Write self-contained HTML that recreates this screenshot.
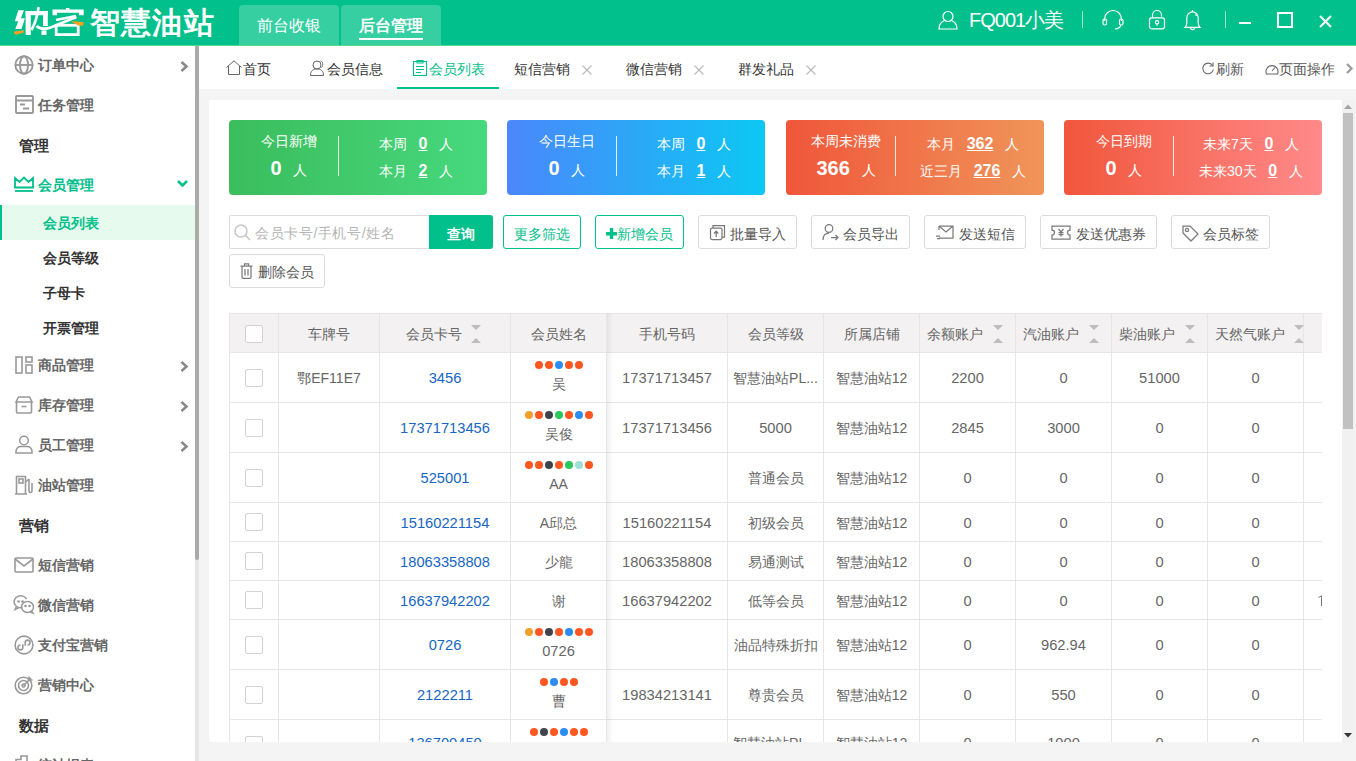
<!DOCTYPE html><html><head><meta charset="utf-8"><style>
*{margin:0;padding:0;box-sizing:border-box}
html,body{width:1356px;height:761px;overflow:hidden;background:#fff;font-family:"Liberation Sans",sans-serif;}
.p{position:absolute;white-space:nowrap}
.c{position:absolute;white-space:nowrap;text-align:center}
svg{position:absolute;overflow:visible}
</style></head><body>
<div class="p" style="left:0;top:0;width:1356px;height:45px;background:#02c08b"></div>
<div class="p" style="left:0;top:45px;width:1356px;height:1px;background:#5ad88c"></div>
<svg style="left:0;top:0" width="90" height="40" viewBox="0 0 90 40"><g fill="#fff"><polygon points="18.3,10.2 23.9,10.2 20.9,18.2 24.9,18.2 21.5,29 15.3,29 18.3,21.2 14.8,21.2"/><rect x="25.6" y="11" width="5.2" height="24"/><rect x="25.6" y="11" width="22.2" height="4.2"/><rect x="43" y="11" width="4.8" height="15"/><rect x="41.5" y="30.5" width="5" height="4.5"/><polygon points="52.5,9.6 83.7,9.6 83.7,15.2 79,15.2 79,12.8 57,12.8 57,15.2 52.5,15.2"/><rect x="66" y="8" width="3.5" height="3"/></g><g fill="none" stroke="#fff"><path d="M38.6 7 Q37 20 31.5 30" stroke-width="2.6"/><path d="M36.5 26 Q42 31 52 27 Q64 22 76.5 17" stroke-width="2.8"/><path d="M56 20 L76 16" stroke-width="2.4"/><rect x="56.2" y="25.3" width="22" height="9.3" stroke-width="2.8"/></g><g fill="#f4a020"><polygon points="14,31.5 24,30.3 23.5,32.8 17,34.6 14.2,34"/><polygon points="72,21 83.7,22.2 83.2,25.8 78.5,25.6 72.5,22.6"/></g></svg>
<div class="p" style="left:90px;top:4px;font-size:30px;letter-spacing:1.2px;line-height:38px;font-weight:bold;color:#fff">智慧油站</div>
<div class="p" style="left:239px;top:5px;width:100px;height:40px;background:#35cfa2;border-radius:4px 4px 0 0"></div>
<div class="p" style="left:341px;top:5px;width:100px;height:40px;background:#35cfa2;border-radius:4px 4px 0 0"></div>
<div class="c" style="left:239px;top:15px;width:100px;font-size:16px;line-height:22px;color:#fff">前台收银</div>
<div class="c" style="left:341px;top:15px;width:100px;font-size:16px;line-height:22px;color:#fff;font-weight:bold">后台管理</div>
<div class="p" style="left:359px;top:38px;width:64px;height:2px;background:#fff"></div>
<svg style="left:938px;top:10px" width="20" height="20" viewBox="0 0 20 20" fill="none" stroke="#fff" stroke-width="1.2"><circle cx="10" cy="6.5" r="5"/><path d="M6.5 10.5 C3 12 1 15 1 19 H19 C19 15 17 12 13.5 10.5"/></svg>
<div class="p" style="left:969px;top:8px;font-size:20px;letter-spacing:-1px;line-height:24px;color:#fff">FQ001小美</div>
<div class="p" style="left:1082px;top:11px;width:1px;height:17px;background:#9fe6cc"></div>
<svg style="left:1102px;top:10px" width="22" height="20" viewBox="0 0 22 20" fill="none" stroke="#fff" stroke-width="1.2"><path d="M2.5 11 V9 A8.5 8.5 0 0 1 19.5 9 V11"/><rect x="1" y="9" width="3.5" height="6" rx="1.5"/><rect x="17.5" y="9" width="3.5" height="6" rx="1.5"/><path d="M19 15 Q18 18.5 13 19"/></svg>
<svg style="left:1148px;top:9px" width="18" height="21" viewBox="0 0 18 21" fill="none" stroke="#fff" stroke-width="1.2"><path d="M4.5 9 V6 A4.5 4.5 0 0 1 13.5 6 V7.5"/><rect x="1.5" y="8.8" width="15" height="11" rx="2.2"/><circle cx="9" cy="13.3" r="1.7"/><path d="M9 15 V16.8"/></svg>
<svg style="left:1184px;top:9px" width="17" height="22" viewBox="0 0 17 22" fill="none" stroke="#fff" stroke-width="1.2"><path d="M8.5 1 V2.5 M1 18.3 Q2.8 16.5 2.8 14 V9 A5.7 6.2 0 0 1 14.2 9 V14 Q14.2 16.5 16 18.3 Z M6.5 18.8 A2 1.8 0 0 0 10.5 18.8 M11.5 5.5 L12.5 7"/></svg>
<div class="p" style="left:1225px;top:11px;width:1px;height:17px;background:#9fe6cc"></div>
<div class="p" style="left:1239px;top:22px;width:12px;height:2px;background:#fff"></div>
<div class="p" style="left:1277px;top:12px;width:16px;height:16px;border:2px solid #fff"></div>
<svg style="left:1319px;top:15px" width="13" height="13" viewBox="0 0 13 13" stroke="#fff" stroke-width="2"><path d="M1 1 L12 12 M12 1 L1 12"/></svg>
<div class="p" style="left:0;top:46px;width:199px;height:715px;background:#fff"></div>
<div class="p" style="left:195px;top:46px;width:4px;height:715px;background:#e6e6e6"></div>
<div class="p" style="left:195px;top:46px;width:4px;height:514px;background:#aaaaaa;border-radius:0 0 2px 2px"></div>
<div class="p" style="left:38px;top:55px;font-size:14px;line-height:20px;font-weight:bold;color:#666">订单中心</div>
<svg style="left:14px;top:55px" width="20" height="20" viewBox="0 0 20 20" fill="none" stroke="#999" stroke-width="1.9"><circle cx="10" cy="10" r="8.7"/><ellipse cx="10" cy="10" rx="4" ry="8.7"/><path d="M1.5 10 H18.5"/></svg>
<svg style="left:180px;top:61px" width="8" height="11" viewBox="0 0 8 11" fill="none" stroke="#888" stroke-width="2.5"><path d="M1.5 1 L6.5 5.5 L1.5 10"/></svg>
<div class="p" style="left:38px;top:95px;font-size:14px;line-height:20px;font-weight:bold;color:#666">任务管理</div>
<svg style="left:15px;top:95px" width="19" height="19" viewBox="0 0 19 19" fill="none" stroke="#999" stroke-width="1.9"><rect x="1" y="1" width="17" height="17" rx="1"/><path d="M1 5.5 H18 M5 9.5 H10 M8 13.5 H14"/></svg>
<div class="p" style="left:19px;top:136px;font-size:15px;line-height:20px;font-weight:bold;color:#333">管理</div>
<div class="p" style="left:38px;top:175px;font-size:14px;line-height:20px;font-weight:bold;color:#02c08b">会员管理</div>
<svg style="left:14px;top:176px" width="20" height="16" viewBox="0 0 20 16" fill="none" stroke="#02c08b" stroke-width="1.8"><path d="M1 11.5 V2 L5.5 6 L10 1.5 L14.5 6 L19 2 V11.5 Z" stroke-linejoin="miter"/><path d="M1 15 H19"/></svg>
<svg style="left:177px;top:180px" width="11" height="7" viewBox="0 0 11 7" fill="none" stroke="#02c08b" stroke-width="2.5"><path d="M1 1 L5.5 5.5 L10 1"/></svg>
<div class="p" style="left:0;top:205px;width:195px;height:35px;background:#e6fbee"></div>
<div class="p" style="left:0;top:205px;width:2px;height:35px;background:#02c08b"></div>
<div class="p" style="left:43px;top:213px;font-size:14px;line-height:20px;font-weight:bold;color:#02c08b">会员列表</div>
<div class="p" style="left:43px;top:248px;font-size:14px;line-height:20px;font-weight:bold;color:#333">会员等级</div>
<div class="p" style="left:43px;top:283px;font-size:14px;line-height:20px;font-weight:bold;color:#333">子母卡</div>
<div class="p" style="left:43px;top:318px;font-size:14px;line-height:20px;font-weight:bold;color:#333">开票管理</div>
<div class="p" style="left:38px;top:355px;font-size:14px;line-height:20px;font-weight:bold;color:#666">商品管理</div>
<svg style="left:15px;top:356px" width="18" height="18" viewBox="0 0 18 18" fill="none" stroke="#999" stroke-width="1.6"><rect x="1" y="1" width="6" height="16"/><rect x="11" y="1" width="6" height="5"/><rect x="11" y="9" width="6" height="8"/></svg>
<svg style="left:180px;top:361px" width="8" height="11" viewBox="0 0 8 11" fill="none" stroke="#888" stroke-width="2.5"><path d="M1.5 1 L6.5 5.5 L1.5 10"/></svg>
<div class="p" style="left:38px;top:395px;font-size:14px;line-height:20px;font-weight:bold;color:#666">库存管理</div>
<svg style="left:15px;top:396px" width="18" height="18" viewBox="0 0 18 18" fill="none" stroke="#999" stroke-width="1.6"><path d="M1 6 L3.5 1 H14.5 L17 6 Z"/><path d="M1.5 6 V16 Q1.5 17 2.5 17 H15.5 Q16.5 17 16.5 16 V6"/><path d="M6.5 10.5 H11.5"/></svg>
<svg style="left:180px;top:401px" width="8" height="11" viewBox="0 0 8 11" fill="none" stroke="#888" stroke-width="2.5"><path d="M1.5 1 L6.5 5.5 L1.5 10"/></svg>
<div class="p" style="left:38px;top:435px;font-size:14px;line-height:20px;font-weight:bold;color:#666">员工管理</div>
<svg style="left:15px;top:435px" width="18" height="19" viewBox="0 0 18 19" fill="none" stroke="#999" stroke-width="1.6"><circle cx="9" cy="5.5" r="4.3"/><path d="M1 18 V16 A5 5 0 0 1 6 11.5 H12 A5 5 0 0 1 17 16 V18 Z"/></svg>
<svg style="left:180px;top:441px" width="8" height="11" viewBox="0 0 8 11" fill="none" stroke="#888" stroke-width="2.5"><path d="M1.5 1 L6.5 5.5 L1.5 10"/></svg>
<div class="p" style="left:38px;top:475px;font-size:14px;line-height:20px;font-weight:bold;color:#666">油站管理</div>
<svg style="left:14px;top:475px" width="20" height="20" viewBox="0 0 20 20" fill="none" stroke="#999" stroke-width="1.6"><path d="M1 19 H13 M2.5 19 V1.5 H11.5 V19"/><rect x="5" y="4" width="4" height="4"/><path d="M11.5 7 L15 4 M15 4 V16 A1.5 1.5 0 0 0 18 16 V8"/></svg>
<div class="p" style="left:19px;top:516px;font-size:15px;line-height:20px;font-weight:bold;color:#333">营销</div>
<div class="p" style="left:38px;top:555px;font-size:14px;line-height:20px;font-weight:bold;color:#666">短信营销</div>
<svg style="left:14px;top:557px" width="20" height="16" viewBox="0 0 20 16" fill="none" stroke="#999" stroke-width="1.6"><rect x="1" y="1" width="18" height="14" rx="1"/><path d="M1 2 L10 9 L19 2"/></svg>
<div class="p" style="left:38px;top:595px;font-size:14px;line-height:20px;font-weight:bold;color:#666">微信营销</div>
<svg style="left:13px;top:595px" width="22" height="20" viewBox="0 0 22 20" fill="none" stroke="#999" stroke-width="1.5"><path d="M9.5 12.5 A6.5 6 0 1 1 13.5 4.2"/><path d="M3.5 11.5 L2 14.5 L5.5 13"/><ellipse cx="14.5" cy="12" rx="6" ry="5.5"/><path d="M18.5 16 L20 18 L17 17"/><circle cx="5.5" cy="6.5" r="0.6" fill="#999"/><circle cx="9.5" cy="6.5" r="0.6" fill="#999"/><circle cx="12.5" cy="11" r="0.6" fill="#999"/><circle cx="16.5" cy="11" r="0.6" fill="#999"/></svg>
<div class="p" style="left:38px;top:635px;font-size:14px;line-height:20px;font-weight:bold;color:#666">支付宝营销</div>
<svg style="left:14px;top:635px" width="20" height="20" viewBox="0 0 20 20" fill="none" stroke="#999" stroke-width="1.6"><circle cx="10" cy="10" r="8.9"/><path d="M8.8 9.2 V12.5 A2.4 2.4 0 1 1 6.4 10.1 M11.2 10.8 V7.5 A2.4 2.4 0 1 1 13.6 9.9"/></svg>
<div class="p" style="left:38px;top:675px;font-size:14px;line-height:20px;font-weight:bold;color:#666">营销中心</div>
<svg style="left:14px;top:675px" width="20" height="20" viewBox="0 0 20 20" fill="none" stroke="#999" stroke-width="1.6"><circle cx="9.5" cy="10.5" r="8.3"/><circle cx="9.5" cy="10.5" r="5"/><circle cx="9.5" cy="10.5" r="1.5"/><path d="M9.5 10.5 L17 3 M15 1.5 V5 H18.5"/></svg>
<div class="p" style="left:19px;top:716px;font-size:15px;line-height:20px;font-weight:bold;color:#333">数据</div>
<div class="p" style="left:38px;top:755px;font-size:14px;line-height:20px;font-weight:bold;color:#666">统计报表</div>
<svg style="left:15px;top:755px" width="18" height="20" viewBox="0 0 18 20" fill="none" stroke="#999" stroke-width="1.6"><path d="M1 19 V4.5 H6 V1 H12 V19 Z"/></svg>
<div class="p" style="left:199px;top:46px;width:1157px;height:43px;background:#fff"></div>
<div class="p" style="left:199px;top:89px;width:1157px;height:672px;background:#f4f4f4"></div>
<svg style="left:226px;top:60px" width="16" height="15" viewBox="0 0 16 15" fill="none" stroke="#666" stroke-width="1"><path d="M0.5 7.5 L8 0.8 L15.5 7.5 M2.5 6 V14.5 H13.5 V6"/></svg>
<div class="p" style="left:243px;top:59px;font-size:14px;line-height:20px;color:#333">首页</div>
<svg style="left:310px;top:60px" width="16" height="16" viewBox="0 0 16 16" fill="none" stroke="#666" stroke-width="1"><circle cx="7" cy="5" r="4"/><path d="M0.5 15.5 C0.5 11 3 9 7 9 C11 9 13.5 11 13.5 15.5 Z M10.5 1 C13 1.5 13.5 5 11.5 7.5"/></svg>
<div class="p" style="left:327px;top:59px;font-size:14px;line-height:20px;color:#333">会员信息</div>
<svg style="left:413px;top:60px" width="14" height="16" viewBox="0 0 14 16" fill="none" stroke="#02c08b" stroke-width="1.1"><rect x="0.5" y="1.5" width="13" height="14"/><path d="M4 0.5 H10 V3 H4 Z M3 6.5 H11 M3 9.5 H11 M3 12.5 H8"/></svg>
<div class="p" style="left:429px;top:59px;font-size:14px;line-height:20px;color:#02c08b">会员列表</div>
<div class="p" style="left:397px;top:87px;width:102px;height:2px;background:#02c08b"></div>
<div class="p" style="left:514px;top:59px;font-size:14px;line-height:20px;color:#333">短信营销</div>
<svg style="left:582px;top:65px" width="10" height="10" viewBox="0 0 10 10" stroke="#bbb" stroke-width="1.1"><path d="M0.5 0.5 L9.5 9.5 M9.5 0.5 L0.5 9.5"/></svg>
<div class="p" style="left:626px;top:59px;font-size:14px;line-height:20px;color:#333">微信营销</div>
<svg style="left:694px;top:65px" width="10" height="10" viewBox="0 0 10 10" stroke="#bbb" stroke-width="1.1"><path d="M0.5 0.5 L9.5 9.5 M9.5 0.5 L0.5 9.5"/></svg>
<div class="p" style="left:738px;top:59px;font-size:14px;line-height:20px;color:#333">群发礼品</div>
<svg style="left:806px;top:65px" width="10" height="10" viewBox="0 0 10 10" stroke="#bbb" stroke-width="1.1"><path d="M0.5 0.5 L9.5 9.5 M9.5 0.5 L0.5 9.5"/></svg>
<svg style="left:1202px;top:62px" width="12" height="13" viewBox="0 0 12 13" fill="none" stroke="#666" stroke-width="1.1"><path d="M10.5 3.5 A5.3 5.3 0 1 0 11.3 7.5"/><path d="M11 0.5 V4 H7.5"/></svg>
<div class="p" style="left:1216px;top:59px;font-size:14px;line-height:20px;color:#555">刷新</div>
<svg style="left:1265px;top:63px" width="14" height="12" viewBox="0 0 14 12" fill="none" stroke="#666" stroke-width="1.1"><path d="M1.5 11 A6 6 0 1 1 12.5 11 Z M7 8 L10 4.5"/></svg>
<div class="p" style="left:1279px;top:59px;font-size:14px;line-height:20px;color:#555">页面操作</div>
<svg style="left:1346px;top:63px" width="7" height="11" viewBox="0 0 7 11" fill="none" stroke="#999" stroke-width="2.2"><path d="M1 1 L5.5 5.5 L1 10"/></svg>
<div class="p" style="left:209px;top:100px;width:1133px;height:642px;background:#fff;border-radius:2px 0 0 2px"></div>
<div class="p" style="left:1342px;top:100px;width:13px;height:642px;background:#f1f1f1"></div>
<div class="p" style="left:1343px;top:113px;width:10px;height:316px;background:#c1c1c1"></div>
<svg style="left:1344px;top:104px" width="8" height="5" viewBox="0 0 8 5"><path d="M0 5 L4 0.5 L8 5 Z" fill="#a3a3a3"/></svg>
<svg style="left:1344px;top:733px" width="8" height="5" viewBox="0 0 8 5"><path d="M0 0 L4 4.5 L8 0 Z" fill="#333"/></svg>
<div class="p" style="left:229px;top:120px;width:258px;height:75px;background:linear-gradient(90deg,#3bbd5c,#47d87e);border-radius:4px"></div>
<div class="c" style="left:229px;top:131px;width:120px;font-size:14px;line-height:20px;color:#fff">今日新增</div>
<div class="c" style="left:229px;top:156px;width:120px;font-size:14px;line-height:24px;color:#fff"><b style="font-size:20px">0</b>&nbsp;&nbsp;&nbsp;人</div>
<div class="p" style="left:338px;top:136px;width:1px;height:40px;background:rgba(255,255,255,0.85)"></div>
<div class="c" style="left:346px;top:134px;width:140px;font-size:14px;line-height:20px;color:#fff">本周&nbsp;&nbsp;&nbsp;<b style="font-size:16px;text-decoration:underline">0</b>&nbsp;&nbsp;&nbsp;人</div>
<div class="c" style="left:346px;top:161px;width:140px;font-size:14px;line-height:20px;color:#fff">本月&nbsp;&nbsp;&nbsp;<b style="font-size:16px;text-decoration:underline">2</b>&nbsp;&nbsp;&nbsp;人</div>
<div class="p" style="left:507px;top:120px;width:258px;height:75px;background:linear-gradient(90deg,#4b87fb,#0cc8f3);border-radius:4px"></div>
<div class="c" style="left:507px;top:131px;width:120px;font-size:14px;line-height:20px;color:#fff">今日生日</div>
<div class="c" style="left:507px;top:156px;width:120px;font-size:14px;line-height:24px;color:#fff"><b style="font-size:20px">0</b>&nbsp;&nbsp;&nbsp;人</div>
<div class="p" style="left:616px;top:136px;width:1px;height:40px;background:rgba(255,255,255,0.85)"></div>
<div class="c" style="left:624px;top:134px;width:140px;font-size:14px;line-height:20px;color:#fff">本周&nbsp;&nbsp;&nbsp;<b style="font-size:16px;text-decoration:underline">0</b>&nbsp;&nbsp;&nbsp;人</div>
<div class="c" style="left:624px;top:161px;width:140px;font-size:14px;line-height:20px;color:#fff">本月&nbsp;&nbsp;&nbsp;<b style="font-size:16px;text-decoration:underline">1</b>&nbsp;&nbsp;&nbsp;人</div>
<div class="p" style="left:786px;top:120px;width:258px;height:75px;background:linear-gradient(90deg,#f0563a,#f0955a);border-radius:4px"></div>
<div class="c" style="left:786px;top:131px;width:120px;font-size:14px;line-height:20px;color:#fff">本周未消费</div>
<div class="c" style="left:786px;top:156px;width:120px;font-size:14px;line-height:24px;color:#fff"><b style="font-size:20px">366</b>&nbsp;&nbsp;&nbsp;人</div>
<div class="p" style="left:895px;top:136px;width:1px;height:40px;background:rgba(255,255,255,0.85)"></div>
<div class="c" style="left:903px;top:134px;width:140px;font-size:14px;line-height:20px;color:#fff">本月&nbsp;&nbsp;&nbsp;<b style="font-size:16px;text-decoration:underline">362</b>&nbsp;&nbsp;&nbsp;人</div>
<div class="c" style="left:903px;top:161px;width:140px;font-size:14px;line-height:20px;color:#fff">近三月&nbsp;&nbsp;&nbsp;<b style="font-size:16px;text-decoration:underline">276</b>&nbsp;&nbsp;&nbsp;人</div>
<div class="p" style="left:1064px;top:120px;width:258px;height:75px;background:linear-gradient(90deg,#f1563b,#ff8a8a);border-radius:4px"></div>
<div class="c" style="left:1064px;top:131px;width:120px;font-size:14px;line-height:20px;color:#fff">今日到期</div>
<div class="c" style="left:1064px;top:156px;width:120px;font-size:14px;line-height:24px;color:#fff"><b style="font-size:20px">0</b>&nbsp;&nbsp;&nbsp;人</div>
<div class="p" style="left:1173px;top:136px;width:1px;height:40px;background:rgba(255,255,255,0.85)"></div>
<div class="c" style="left:1181px;top:134px;width:140px;font-size:14px;line-height:20px;color:#fff">未来7天&nbsp;&nbsp;&nbsp;<b style="font-size:16px;text-decoration:underline">0</b>&nbsp;&nbsp;&nbsp;人</div>
<div class="c" style="left:1181px;top:161px;width:140px;font-size:14px;line-height:20px;color:#fff">未来30天&nbsp;&nbsp;&nbsp;<b style="font-size:16px;text-decoration:underline">0</b>&nbsp;&nbsp;&nbsp;人</div>
<div class="p" style="left:229px;top:215px;width:201px;height:34px;border:1px solid #dcdcdc;border-right:none;border-radius:2px 0 0 2px"></div>
<svg style="left:234px;top:224px" width="17" height="17" viewBox="0 0 17 17" fill="none" stroke="#c8c8c8" stroke-width="1.6"><circle cx="7" cy="7" r="6"/><path d="M11.5 11.5 L16 16"/></svg>
<div class="p" style="left:255px;top:223px;font-size:14px;letter-spacing:0.6px;line-height:20px;color:#b5b5b5">会员卡号/手机号/姓名</div>
<div class="c" style="left:429px;top:215px;width:64px;height:34px;background:#02c08b;border-radius:0 3px 3px 0;color:#fff;font-size:14px;line-height:38px;font-weight:bold">查询</div>
<div class="p" style="left:503px;top:215px;width:78px;height:34px;border:1px solid #02c08b;border-radius:3px;background:#fff"></div>

<div class="c" style="left:503px;top:224px;width:78px;font-size:14px;line-height:20px;color:#02c08b">更多筛选</div>
<div class="p" style="left:595px;top:215px;width:89px;height:34px;border:1px solid #02c08b;border-radius:3px;background:#fff"></div>

<svg style="left:606px;top:228px" width="11" height="11" viewBox="0 0 11 11"><path d="M0 4 H11 V7.5 H0 Z M3.8 0 H7.3 V11 H3.8 Z" fill="#02c08b"/></svg>
<div class="p" style="left:617px;top:224px;font-size:14px;line-height:20px;color:#02c08b">新增会员</div>
<div class="p" style="left:698px;top:215px;width:99px;height:34px;border:1px solid #dcdcdc;border-radius:3px;background:#fff"></div>

<div class="p" style="left:730px;top:224px;font-size:14px;line-height:20px;color:#555">批量导入</div>
<div class="p" style="left:811px;top:215px;width:99px;height:34px;border:1px solid #dcdcdc;border-radius:3px;background:#fff"></div>

<div class="p" style="left:843px;top:224px;font-size:14px;line-height:20px;color:#555">会员导出</div>
<div class="p" style="left:924px;top:215px;width:102px;height:34px;border:1px solid #dcdcdc;border-radius:3px;background:#fff"></div>

<div class="p" style="left:959px;top:224px;font-size:14px;line-height:20px;color:#555">发送短信</div>
<div class="p" style="left:1040px;top:215px;width:117px;height:34px;border:1px solid #dcdcdc;border-radius:3px;background:#fff"></div>

<div class="p" style="left:1076px;top:224px;font-size:14px;line-height:20px;color:#555">发送优惠券</div>
<div class="p" style="left:1171px;top:215px;width:99px;height:34px;border:1px solid #dcdcdc;border-radius:3px;background:#fff"></div>

<div class="p" style="left:1203px;top:224px;font-size:14px;line-height:20px;color:#555">会员标签</div>
<svg style="left:709px;top:224px" width="17" height="17" viewBox="0 0 17 17" fill="none" stroke="#7a7a7a" stroke-width="1.25"><path d="M4 4 V1.5 H15.5 V13 H13"/><rect x="1.5" y="4" width="11.5" height="11.5" rx="1.5"/><path d="M7.2 13 V7.5 M5 9.5 L7.2 7.2 L9.4 9.5"/></svg>
<svg style="left:822px;top:224px" width="17" height="17" viewBox="0 0 17 17" fill="none" stroke="#7a7a7a" stroke-width="1.25"><circle cx="7" cy="4.5" r="3.8"/><path d="M1 16 C1 11 3.5 9 7 9 M9 13.5 H16 M13.5 11 L16 13.5 L13.5 16"/></svg>
<svg style="left:935px;top:225px" width="19" height="15" viewBox="0 0 19 15" fill="none" stroke="#7a7a7a" stroke-width="1.25"><path d="M4 1 H18 V13 H4 M4 1 V5 M4 1 L11 7 L18 1"/><path d="M1 11 H5 M2 13.5 H5"/></svg>
<svg style="left:1051px;top:225px" width="20" height="15" viewBox="0 0 20 15" fill="none" stroke="#7a7a7a" stroke-width="1.25"><path d="M1 1 H19 V5 A2.5 2.5 0 0 0 19 10 V14 H1 V10 A2.5 2.5 0 0 0 1 5 Z"/><path d="M7.5 4 L10 7 L12.5 4 M10 7 V11.5 M7.5 7.5 H12.5 M7.5 9.5 H12.5"/></svg>
<svg style="left:1182px;top:225px" width="17" height="17" viewBox="0 0 17 17" fill="none" stroke="#7a7a7a" stroke-width="1.25"><path d="M1 1 H8 L16 9 L9 16 L1 8 Z"/><circle cx="5" cy="5" r="1.6"/></svg>
<div class="p" style="left:229px;top:254px;width:96px;height:34px;border:1px solid #dcdcdc;border-radius:3px;background:#fff"></div>

<svg style="left:240px;top:263px" width="13" height="16" viewBox="0 0 13 16" fill="none" stroke="#7a7a7a" stroke-width="1.25"><path d="M0.5 3 H12.5 M4.5 3 V0.8 H8.5 V3 M2 3 V14 Q2 15.3 3.3 15.3 H9.7 Q11 15.3 11 14 V3 M5 6 V12.5 M8 6 V12.5"/></svg>
<div class="p" style="left:258px;top:262px;font-size:14px;line-height:20px;color:#555">删除会员</div>
<div class="p" style="left:229px;top:313px;width:1093px;height:429px;overflow:hidden">
<div class="p" style="left:0px;top:0px;width:1093px;height:40px;background:#f3f1f2"></div>
<div class="p" style="left:0px;top:0px;width:1093px;height:1px;background:#e6e6e6"></div>
<div class="p" style="left:0px;top:39px;width:1093px;height:1px;background:#e6e6e6"></div>
<div class="p" style="left:0px;top:89px;width:1093px;height:1px;background:#e6e6e6"></div>
<div class="p" style="left:0px;top:139px;width:1093px;height:1px;background:#e6e6e6"></div>
<div class="p" style="left:0px;top:189px;width:1093px;height:1px;background:#e6e6e6"></div>
<div class="p" style="left:0px;top:228px;width:1093px;height:1px;background:#e6e6e6"></div>
<div class="p" style="left:0px;top:267px;width:1093px;height:1px;background:#e6e6e6"></div>
<div class="p" style="left:0px;top:306px;width:1093px;height:1px;background:#e6e6e6"></div>
<div class="p" style="left:0px;top:356px;width:1093px;height:1px;background:#e6e6e6"></div>
<div class="p" style="left:0px;top:406px;width:1093px;height:1px;background:#e6e6e6"></div>
<div class="p" style="left:0px;top:0px;width:1px;height:429px;background:#e6e6e6"></div>
<div class="p" style="left:49px;top:0px;width:1px;height:429px;background:#e6e6e6"></div>
<div class="p" style="left:150px;top:0px;width:1px;height:429px;background:#e6e6e6"></div>
<div class="p" style="left:281px;top:0px;width:1px;height:429px;background:#e6e6e6"></div>
<div class="p" style="left:377px;top:0px;width:1px;height:429px;background:#e6e6e6"></div>
<div class="p" style="left:498px;top:0px;width:1px;height:429px;background:#e6e6e6"></div>
<div class="p" style="left:594px;top:0px;width:1px;height:429px;background:#e6e6e6"></div>
<div class="p" style="left:690px;top:0px;width:1px;height:429px;background:#e6e6e6"></div>
<div class="p" style="left:786px;top:0px;width:1px;height:429px;background:#e6e6e6"></div>
<div class="p" style="left:882px;top:0px;width:1px;height:429px;background:#e6e6e6"></div>
<div class="p" style="left:978px;top:0px;width:1px;height:429px;background:#e6e6e6"></div>
<div class="p" style="left:1074px;top:0px;width:1px;height:429px;background:#e6e6e6"></div>
<div class="p" style="left:378px;top:0;width:6px;height:429px;background:linear-gradient(90deg,rgba(0,0,0,0.06),rgba(0,0,0,0))"></div>
<div class="p" style="left:16px;top:12px;width:18px;height:18px;border:1px solid #d3d3d3;border-radius:2px;background:#fff"></div>
<div class="c" style="left:50px;top:11px;width:100px;font-size:14px;line-height:20px;color:#666">车牌号</div>
<div class="p" style="left:177px;top:11px;font-size:14px;line-height:20px;color:#666">会员卡号</div>
<svg style="left:242px;top:12px" width="10" height="18" viewBox="0 0 10 18"><path d="M0 0 H10 L5 5 Z M0 18 H10 L5 13 Z" fill="#bdbdbd"/></svg>
<div class="c" style="left:282px;top:11px;width:95px;font-size:14px;line-height:20px;color:#666">会员姓名</div>
<div class="c" style="left:378px;top:11px;width:120px;font-size:14px;line-height:20px;color:#666">手机号码</div>
<div class="c" style="left:499px;top:11px;width:95px;font-size:14px;line-height:20px;color:#666">会员等级</div>
<div class="c" style="left:595px;top:11px;width:95px;font-size:14px;line-height:20px;color:#666">所属店铺</div>
<div class="p" style="left:698px;top:11px;font-size:14px;line-height:20px;color:#666">余额账户</div>
<svg style="left:764px;top:12px" width="10" height="18" viewBox="0 0 10 18"><path d="M0 0 H10 L5 5 Z M0 18 H10 L5 13 Z" fill="#bdbdbd"/></svg>
<div class="p" style="left:794px;top:11px;font-size:14px;line-height:20px;color:#666">汽油账户</div>
<svg style="left:860px;top:12px" width="10" height="18" viewBox="0 0 10 18"><path d="M0 0 H10 L5 5 Z M0 18 H10 L5 13 Z" fill="#bdbdbd"/></svg>
<div class="p" style="left:890px;top:11px;font-size:14px;line-height:20px;color:#666">柴油账户</div>
<svg style="left:956px;top:12px" width="10" height="18" viewBox="0 0 10 18"><path d="M0 0 H10 L5 5 Z M0 18 H10 L5 13 Z" fill="#bdbdbd"/></svg>
<div class="p" style="left:986px;top:11px;font-size:14px;line-height:20px;color:#666">天然气账户</div>
<svg style="left:1065px;top:12px" width="10" height="18" viewBox="0 0 10 18"><path d="M0 0 H10 L5 5 Z M0 18 H10 L5 13 Z" fill="#bdbdbd"/></svg>
<div class="p" style="left:16px;top:56px;width:18px;height:18px;border:1px solid #d3d3d3;border-radius:2px;background:#fff"></div>
<div class="c" style="left:50px;top:55px;width:100px;font-size:14px;line-height:20px;color:#666">鄂EF11E7</div>
<div class="c" style="left:151px;top:55px;width:130px;font-size:14.7px;line-height:20px;color:#1766c4">3456</div>
<div class="p" style="left:306.0px;top:48px;width:48px;height:8px"><span style="position:absolute;left:0px;top:0;width:8px;height:8px;border-radius:50%;background:#ff5722"></span><span style="position:absolute;left:10px;top:0;width:8px;height:8px;border-radius:50%;background:#ff5722"></span><span style="position:absolute;left:20px;top:0;width:8px;height:8px;border-radius:50%;background:#2d8cf0"></span><span style="position:absolute;left:30px;top:0;width:8px;height:8px;border-radius:50%;background:#ff5722"></span><span style="position:absolute;left:40px;top:0;width:8px;height:8px;border-radius:50%;background:#ff5722"></span></div>
<div class="c" style="left:282px;top:61px;width:95px;font-size:14px;line-height:20px;color:#666">吴</div>
<div class="c" style="left:378px;top:55px;width:120px;font-size:14.7px;line-height:20px;color:#666">17371713457</div>
<div class="c" style="left:499px;top:55px;width:95px;font-size:14px;line-height:20px;color:#666">智慧油站PL...</div>
<div class="c" style="left:595px;top:55px;width:95px;font-size:14px;line-height:20px;color:#666">智慧油站12</div>
<div class="c" style="left:691px;top:55px;width:95px;font-size:14.7px;line-height:20px;color:#666">2200</div>
<div class="c" style="left:787px;top:55px;width:95px;font-size:14.7px;line-height:20px;color:#666">0</div>
<div class="c" style="left:883px;top:55px;width:95px;font-size:14.7px;line-height:20px;color:#666">51000</div>
<div class="c" style="left:979px;top:55px;width:95px;font-size:14.7px;line-height:20px;color:#666">0</div>
<div class="p" style="left:16px;top:106px;width:18px;height:18px;border:1px solid #d3d3d3;border-radius:2px;background:#fff"></div>
<div class="c" style="left:50px;top:105px;width:100px;font-size:14px;line-height:20px;color:#666"></div>
<div class="c" style="left:151px;top:105px;width:130px;font-size:14.7px;line-height:20px;color:#1766c4">17371713456</div>
<div class="p" style="left:296.0px;top:98px;width:68px;height:8px"><span style="position:absolute;left:0px;top:0;width:8px;height:8px;border-radius:50%;background:#f0a02c"></span><span style="position:absolute;left:10px;top:0;width:8px;height:8px;border-radius:50%;background:#ff5722"></span><span style="position:absolute;left:20px;top:0;width:8px;height:8px;border-radius:50%;background:#3f434a"></span><span style="position:absolute;left:30px;top:0;width:8px;height:8px;border-radius:50%;background:#2ac75a"></span><span style="position:absolute;left:40px;top:0;width:8px;height:8px;border-radius:50%;background:#ff5722"></span><span style="position:absolute;left:50px;top:0;width:8px;height:8px;border-radius:50%;background:#2d8cf0"></span><span style="position:absolute;left:60px;top:0;width:8px;height:8px;border-radius:50%;background:#ff5722"></span></div>
<div class="c" style="left:282px;top:111px;width:95px;font-size:14px;line-height:20px;color:#666">吴俊</div>
<div class="c" style="left:378px;top:105px;width:120px;font-size:14.7px;line-height:20px;color:#666">17371713456</div>
<div class="c" style="left:499px;top:105px;width:95px;font-size:14.7px;line-height:20px;color:#666">5000</div>
<div class="c" style="left:595px;top:105px;width:95px;font-size:14px;line-height:20px;color:#666">智慧油站12</div>
<div class="c" style="left:691px;top:105px;width:95px;font-size:14.7px;line-height:20px;color:#666">2845</div>
<div class="c" style="left:787px;top:105px;width:95px;font-size:14.7px;line-height:20px;color:#666">3000</div>
<div class="c" style="left:883px;top:105px;width:95px;font-size:14.7px;line-height:20px;color:#666">0</div>
<div class="c" style="left:979px;top:105px;width:95px;font-size:14.7px;line-height:20px;color:#666">0</div>
<div class="p" style="left:16px;top:156px;width:18px;height:18px;border:1px solid #d3d3d3;border-radius:2px;background:#fff"></div>
<div class="c" style="left:50px;top:155px;width:100px;font-size:14px;line-height:20px;color:#666"></div>
<div class="c" style="left:151px;top:155px;width:130px;font-size:14.7px;line-height:20px;color:#1766c4">525001</div>
<div class="p" style="left:296.0px;top:148px;width:68px;height:8px"><span style="position:absolute;left:0px;top:0;width:8px;height:8px;border-radius:50%;background:#ff5722"></span><span style="position:absolute;left:10px;top:0;width:8px;height:8px;border-radius:50%;background:#ff5722"></span><span style="position:absolute;left:20px;top:0;width:8px;height:8px;border-radius:50%;background:#3f434a"></span><span style="position:absolute;left:30px;top:0;width:8px;height:8px;border-radius:50%;background:#ff5722"></span><span style="position:absolute;left:40px;top:0;width:8px;height:8px;border-radius:50%;background:#2ac75a"></span><span style="position:absolute;left:50px;top:0;width:8px;height:8px;border-radius:50%;background:#9fe0d4"></span><span style="position:absolute;left:60px;top:0;width:8px;height:8px;border-radius:50%;background:#ff5722"></span></div>
<div class="c" style="left:282px;top:161px;width:95px;font-size:14px;line-height:20px;color:#666">AA</div>
<div class="c" style="left:378px;top:155px;width:120px;font-size:14px;line-height:20px;color:#666"></div>
<div class="c" style="left:499px;top:155px;width:95px;font-size:14px;line-height:20px;color:#666">普通会员</div>
<div class="c" style="left:595px;top:155px;width:95px;font-size:14px;line-height:20px;color:#666">智慧油站12</div>
<div class="c" style="left:691px;top:155px;width:95px;font-size:14.7px;line-height:20px;color:#666">0</div>
<div class="c" style="left:787px;top:155px;width:95px;font-size:14.7px;line-height:20px;color:#666">0</div>
<div class="c" style="left:883px;top:155px;width:95px;font-size:14.7px;line-height:20px;color:#666">0</div>
<div class="c" style="left:979px;top:155px;width:95px;font-size:14.7px;line-height:20px;color:#666">0</div>
<div class="p" style="left:16px;top:200px;width:18px;height:18px;border:1px solid #d3d3d3;border-radius:2px;background:#fff"></div>
<div class="c" style="left:50px;top:200px;width:100px;font-size:14px;line-height:20px;color:#666"></div>
<div class="c" style="left:151px;top:200px;width:130px;font-size:14.7px;line-height:20px;color:#1766c4">15160221154</div>
<div class="c" style="left:282px;top:200px;width:95px;font-size:14px;line-height:20px;color:#666">A邱总</div>
<div class="c" style="left:378px;top:200px;width:120px;font-size:14.7px;line-height:20px;color:#666">15160221154</div>
<div class="c" style="left:499px;top:200px;width:95px;font-size:14px;line-height:20px;color:#666">初级会员</div>
<div class="c" style="left:595px;top:200px;width:95px;font-size:14px;line-height:20px;color:#666">智慧油站12</div>
<div class="c" style="left:691px;top:200px;width:95px;font-size:14.7px;line-height:20px;color:#666">0</div>
<div class="c" style="left:787px;top:200px;width:95px;font-size:14.7px;line-height:20px;color:#666">0</div>
<div class="c" style="left:883px;top:200px;width:95px;font-size:14.7px;line-height:20px;color:#666">0</div>
<div class="c" style="left:979px;top:200px;width:95px;font-size:14.7px;line-height:20px;color:#666">0</div>
<div class="p" style="left:16px;top:239px;width:18px;height:18px;border:1px solid #d3d3d3;border-radius:2px;background:#fff"></div>
<div class="c" style="left:50px;top:239px;width:100px;font-size:14px;line-height:20px;color:#666"></div>
<div class="c" style="left:151px;top:239px;width:130px;font-size:14.7px;line-height:20px;color:#1766c4">18063358808</div>
<div class="c" style="left:282px;top:239px;width:95px;font-size:14px;line-height:20px;color:#666">少龍</div>
<div class="c" style="left:378px;top:239px;width:120px;font-size:14.7px;line-height:20px;color:#666">18063358808</div>
<div class="c" style="left:499px;top:239px;width:95px;font-size:14px;line-height:20px;color:#666">易通测试</div>
<div class="c" style="left:595px;top:239px;width:95px;font-size:14px;line-height:20px;color:#666">智慧油站12</div>
<div class="c" style="left:691px;top:239px;width:95px;font-size:14.7px;line-height:20px;color:#666">0</div>
<div class="c" style="left:787px;top:239px;width:95px;font-size:14.7px;line-height:20px;color:#666">0</div>
<div class="c" style="left:883px;top:239px;width:95px;font-size:14.7px;line-height:20px;color:#666">0</div>
<div class="c" style="left:979px;top:239px;width:95px;font-size:14.7px;line-height:20px;color:#666">0</div>
<div class="p" style="left:16px;top:278px;width:18px;height:18px;border:1px solid #d3d3d3;border-radius:2px;background:#fff"></div>
<div class="c" style="left:50px;top:278px;width:100px;font-size:14px;line-height:20px;color:#666"></div>
<div class="c" style="left:151px;top:278px;width:130px;font-size:14.7px;line-height:20px;color:#1766c4">16637942202</div>
<div class="c" style="left:282px;top:278px;width:95px;font-size:14px;line-height:20px;color:#666">谢</div>
<div class="c" style="left:378px;top:278px;width:120px;font-size:14.7px;line-height:20px;color:#666">16637942202</div>
<div class="c" style="left:499px;top:278px;width:95px;font-size:14px;line-height:20px;color:#666">低等会员</div>
<div class="c" style="left:595px;top:278px;width:95px;font-size:14px;line-height:20px;color:#666">智慧油站12</div>
<div class="c" style="left:691px;top:278px;width:95px;font-size:14.7px;line-height:20px;color:#666">0</div>
<div class="c" style="left:787px;top:278px;width:95px;font-size:14.7px;line-height:20px;color:#666">0</div>
<div class="c" style="left:883px;top:278px;width:95px;font-size:14.7px;line-height:20px;color:#666">0</div>
<div class="c" style="left:979px;top:278px;width:95px;font-size:14.7px;line-height:20px;color:#666">0</div>
<div class="p" style="left:16px;top:323px;width:18px;height:18px;border:1px solid #d3d3d3;border-radius:2px;background:#fff"></div>
<div class="c" style="left:50px;top:322px;width:100px;font-size:14px;line-height:20px;color:#666"></div>
<div class="c" style="left:151px;top:322px;width:130px;font-size:14.7px;line-height:20px;color:#1766c4">0726</div>
<div class="p" style="left:296.0px;top:315px;width:68px;height:8px"><span style="position:absolute;left:0px;top:0;width:8px;height:8px;border-radius:50%;background:#f0a02c"></span><span style="position:absolute;left:10px;top:0;width:8px;height:8px;border-radius:50%;background:#ff5722"></span><span style="position:absolute;left:20px;top:0;width:8px;height:8px;border-radius:50%;background:#3f434a"></span><span style="position:absolute;left:30px;top:0;width:8px;height:8px;border-radius:50%;background:#ff5722"></span><span style="position:absolute;left:40px;top:0;width:8px;height:8px;border-radius:50%;background:#2d8cf0"></span><span style="position:absolute;left:50px;top:0;width:8px;height:8px;border-radius:50%;background:#ff5722"></span><span style="position:absolute;left:60px;top:0;width:8px;height:8px;border-radius:50%;background:#ff5722"></span></div>
<div class="c" style="left:282px;top:328px;width:95px;font-size:14.7px;line-height:20px;color:#666">0726</div>
<div class="c" style="left:378px;top:322px;width:120px;font-size:14px;line-height:20px;color:#666"></div>
<div class="c" style="left:499px;top:322px;width:95px;font-size:14px;line-height:20px;color:#666">油品特殊折扣</div>
<div class="c" style="left:595px;top:322px;width:95px;font-size:14px;line-height:20px;color:#666">智慧油站12</div>
<div class="c" style="left:691px;top:322px;width:95px;font-size:14.7px;line-height:20px;color:#666">0</div>
<div class="c" style="left:787px;top:322px;width:95px;font-size:14.7px;line-height:20px;color:#666">962.94</div>
<div class="c" style="left:883px;top:322px;width:95px;font-size:14.7px;line-height:20px;color:#666">0</div>
<div class="c" style="left:979px;top:322px;width:95px;font-size:14.7px;line-height:20px;color:#666">0</div>
<div class="p" style="left:16px;top:373px;width:18px;height:18px;border:1px solid #d3d3d3;border-radius:2px;background:#fff"></div>
<div class="c" style="left:50px;top:372px;width:100px;font-size:14px;line-height:20px;color:#666"></div>
<div class="c" style="left:151px;top:372px;width:130px;font-size:14.7px;line-height:20px;color:#1766c4">2122211</div>
<div class="p" style="left:311.0px;top:365px;width:38px;height:8px"><span style="position:absolute;left:0px;top:0;width:8px;height:8px;border-radius:50%;background:#ff5722"></span><span style="position:absolute;left:10px;top:0;width:8px;height:8px;border-radius:50%;background:#2d8cf0"></span><span style="position:absolute;left:20px;top:0;width:8px;height:8px;border-radius:50%;background:#ff5722"></span><span style="position:absolute;left:30px;top:0;width:8px;height:8px;border-radius:50%;background:#ff5722"></span></div>
<div class="c" style="left:282px;top:378px;width:95px;font-size:14px;line-height:20px;color:#666">曹</div>
<div class="c" style="left:378px;top:372px;width:120px;font-size:14.7px;line-height:20px;color:#666">19834213141</div>
<div class="c" style="left:499px;top:372px;width:95px;font-size:14px;line-height:20px;color:#666">尊贵会员</div>
<div class="c" style="left:595px;top:372px;width:95px;font-size:14px;line-height:20px;color:#666">智慧油站12</div>
<div class="c" style="left:691px;top:372px;width:95px;font-size:14.7px;line-height:20px;color:#666">0</div>
<div class="c" style="left:787px;top:372px;width:95px;font-size:14.7px;line-height:20px;color:#666">550</div>
<div class="c" style="left:883px;top:372px;width:95px;font-size:14.7px;line-height:20px;color:#666">0</div>
<div class="c" style="left:979px;top:372px;width:95px;font-size:14.7px;line-height:20px;color:#666">0</div>
<div class="p" style="left:16px;top:423px;width:18px;height:18px;border:1px solid #d3d3d3;border-radius:2px;background:#fff"></div>
<div class="c" style="left:50px;top:422px;width:100px;font-size:14px;line-height:20px;color:#666"></div>
<div class="c" style="left:151px;top:420px;width:130px;font-size:14.7px;line-height:20px;color:#1766c4">136700450</div>
<div class="p" style="left:301.0px;top:415px;width:58px;height:8px"><span style="position:absolute;left:0px;top:0;width:8px;height:8px;border-radius:50%;background:#ff5722"></span><span style="position:absolute;left:10px;top:0;width:8px;height:8px;border-radius:50%;background:#3f434a"></span><span style="position:absolute;left:20px;top:0;width:8px;height:8px;border-radius:50%;background:#ff5722"></span><span style="position:absolute;left:30px;top:0;width:8px;height:8px;border-radius:50%;background:#2d8cf0"></span><span style="position:absolute;left:40px;top:0;width:8px;height:8px;border-radius:50%;background:#ff5722"></span><span style="position:absolute;left:50px;top:0;width:8px;height:8px;border-radius:50%;background:#ff5722"></span></div>
<div class="c" style="left:282px;top:428px;width:95px;font-size:14px;line-height:20px;color:#666"></div>
<div class="c" style="left:378px;top:420px;width:120px;font-size:14px;line-height:20px;color:#666"></div>
<div class="c" style="left:499px;top:420px;width:95px;font-size:14px;line-height:20px;color:#666">智慧油站PL...</div>
<div class="c" style="left:595px;top:420px;width:95px;font-size:14px;line-height:20px;color:#666">智慧油站12</div>
<div class="c" style="left:691px;top:420px;width:95px;font-size:14.7px;line-height:20px;color:#666">0</div>
<div class="c" style="left:787px;top:420px;width:95px;font-size:14.7px;line-height:20px;color:#666">1000</div>
<div class="c" style="left:883px;top:420px;width:95px;font-size:14.7px;line-height:20px;color:#666">0</div>
<div class="c" style="left:979px;top:420px;width:95px;font-size:14.7px;line-height:20px;color:#666">0</div>
<svg style="left:1089px;top:282px" width="5" height="12" viewBox="0 0 5 12" fill="none" stroke="#777" stroke-width="1"><path d="M0.5 2.5 L3.5 0.8 V11"/></svg>
</div>
</body></html>
